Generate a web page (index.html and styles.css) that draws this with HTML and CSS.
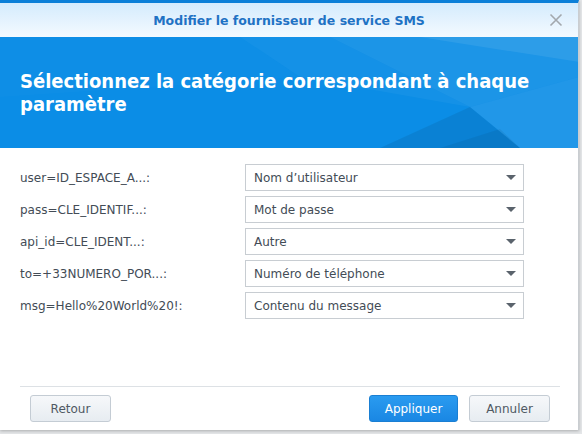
FILE: index.html
```html
<!DOCTYPE html>
<html lang="fr">
<head>
<meta charset="utf-8">
<title>Modifier le fournisseur de service SMS</title>
<link rel="stylesheet" href="styles.css">
</head>
<body>
<div class="dialog">
  <div class="titlebar">
    <span class="spacer"></span>
    <span class="title">Modifier le fournisseur de service SMS</span>
    <span class="close-wrap">
      <svg class="close" width="14" height="14" viewBox="0 0 14 14"><path d="M1.5 1.5 L12.5 12.5 M12.5 1.5 L1.5 12.5" stroke="#a3a8ad" stroke-width="1.6" fill="none"/></svg>
    </span>
  </div>
  <div class="banner">
    <svg class="facets" width="579" height="111" viewBox="0 0 579 111" preserveAspectRatio="none">
      <polygon points="330,0 579,0 579,40 470,70" fill="#ffffff" fill-opacity="0.07"/>
      <polygon points="420,0 579,0 579,25" fill="#ffffff" fill-opacity="0.08"/>
      <polygon points="470,70 579,40 579,111 520,111" fill="#ffffff" fill-opacity="0.09"/>
      <polygon points="380,111 470,70 520,111" fill="#000000" fill-opacity="0.08"/>
      <polygon points="240,0 330,0 470,70 300,40" fill="#ffffff" fill-opacity="0.04"/>
      <polygon points="440,111 500,92 520,111" fill="#000000" fill-opacity="0.06"/>
      <polygon points="0,0 240,0 300,40 0,60" fill="#ffffff" fill-opacity="0.015"/>
    </svg>
    <h1 class="headline">Sélectionnez la catégorie correspondant à chaque paramètre</h1>
  </div>
  <div class="content">
    <div class="row">
      <span class="label">user=ID_ESPACE_A...:</span>
      <div class="select"><span>Nom d’utilisateur</span><span class="arrow"></span></div>
    </div>
    <div class="row">
      <span class="label">pass=CLE_IDENTIF...:</span>
      <div class="select"><span>Mot de passe</span><span class="arrow"></span></div>
    </div>
    <div class="row">
      <span class="label">api_id=CLE_IDENT...:</span>
      <div class="select"><span>Autre</span><span class="arrow"></span></div>
    </div>
    <div class="row">
      <span class="label">to=+33NUMERO_POR...:</span>
      <div class="select"><span>Numéro de téléphone</span><span class="arrow"></span></div>
    </div>
    <div class="row">
      <span class="label">msg=Hello%20World%20!:</span>
      <div class="select"><span>Contenu du message</span><span class="arrow"></span></div>
    </div>
  </div>
  <div class="footer">
    <button class="btn">Retour</button>
    <span class="grow"></span>
    <button class="btn primary">Appliquer</button>
    <button class="btn">Annuler</button>
  </div>
</div>
</body>
</html>
```
FILE: styles.css
```css
html, body {
  margin: 0;
  padding: 0;
}
body {
  background: #e4e6e8;
  width: 582px;
  height: 434px;
  overflow: hidden;
  font-family: "DejaVu Sans", Verdana, sans-serif;
}
.dialog {
  width: 579px;
  height: 430px;
  box-sizing: border-box;
  background: #ffffff;
  border-top: 3px solid #0b7fd8;
  border-right: 1px solid #c9cdd1;
  display: flex;
  flex-direction: column;
  box-shadow: 0 1px 3px rgba(0,0,0,0.25);
}
.titlebar {
  height: 34px;
  flex: none;
  display: grid;
  grid-template-columns: 1fr auto 1fr;
  align-items: center;
  background: linear-gradient(#d4ebfd, #f4faff);
}
.title {
  font-size: 12.5px;
  font-weight: bold;
  color: #1f72c4;
}
.close-wrap {
  justify-self: end;
  display: flex;
  padding-right: 15px;
}
.banner {
  position: relative;
  height: 111px;
  flex: none;
  background: #0b8de6;
  display: flex;
  align-items: center;
  padding: 0 20px;
  overflow: hidden;
}
.facets {
  position: absolute;
  left: 0;
  top: 0;
}
.headline {
  position: relative;
  margin: 0;
  color: #ffffff;
  font-family: "DejaVu Sans Condensed", "DejaVu Sans", sans-serif;
  font-size: 20px;
  line-height: 23px;
  font-weight: bold;
  width: 530px;
}
.content {
  flex: 1;
  padding: 16px 0 0 20px;
  display: flex;
  flex-direction: column;
  gap: 5px;
}
.row {
  display: flex;
  align-items: center;
  height: 27px;
}
.label {
  width: 225px;
  font-size: 12px;
  color: #434c56;
  padding-top: 1px;
}
.select {
  width: 279px;
  height: 27px;
  box-sizing: border-box;
  border: 1px solid #c8cdd2;
  display: flex;
  align-items: center;
  justify-content: space-between;
  padding: 0 7px 0 8px;
  font-size: 12px;
  color: #434c56;
}
.arrow {
  width: 0;
  height: 0;
  border-left: 5px solid transparent;
  border-right: 5px solid transparent;
  border-top: 5px solid #5a636c;
}
.footer {
  flex: none;
  margin: 0 18px 0 20px;
  border-top: 1px solid #dde1e5;
  padding: 8px 10px 8px 10px;
  display: flex;
  align-items: center;
}
.grow {
  flex: 1;
}
.btn {
  height: 27px;
  width: 81px;
  box-sizing: border-box;
  border: 1px solid #c4ccd4;
  border-radius: 3px;
  background: linear-gradient(#f6f8fa, #e7ecf1);
  font-family: "DejaVu Sans", Verdana, sans-serif;
  font-size: 12px;
  color: #4f5963;
  padding: 0;
  margin-left: 11px;
}
.btn:first-child {
  margin-left: 0;
}
.btn.primary {
  width: 89px;
  background: linear-gradient(#2a9bf0, #1a87e3);
  border-color: #1a7fd3;
  color: #ffffff;
}
```
